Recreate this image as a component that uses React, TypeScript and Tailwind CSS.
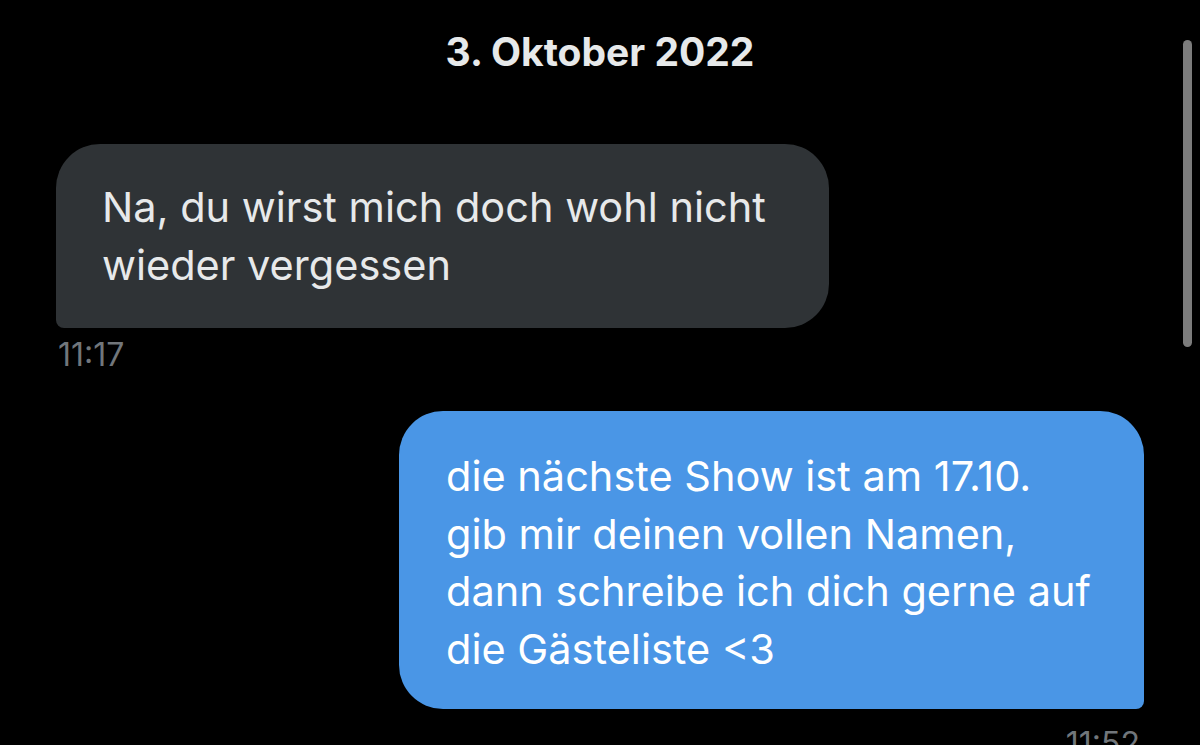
import React from "react";

const font = { fontFamily: "Inter, 'Noto Sans', sans-serif" };

const App = () => (
  <main
    className="relative w-[1200px] h-[745px] overflow-hidden bg-black text-[#e7e9ea]"
    style={font}
  >
    <div className="pt-[29px] text-center text-[39px] leading-[46px] font-bold text-[#e7e9ea]">
      3. Oktober 2022
    </div>

    <div className="mt-[69px] pl-[56px]">
      <div className="w-[773px] h-[184px] bg-[#2f3336] rounded-[44px] rounded-bl-[8px] px-[46px] py-[34px] text-[41.5px] leading-[58px] text-[#e7e9ea]">
        Na, du wirst mich doch wohl nicht
        <br />
        wieder vergessen
      </div>
      <div className="mt-[8px] pl-[2px] text-[32px] leading-[38px] text-[#71767b]">
        11:17
      </div>
    </div>

    <div className="mt-[37px] flex flex-col items-end pr-[56px]">
      <div className="w-[745px] h-[298px] bg-[#4a96e6] rounded-[44px] rounded-br-[8px] pl-[47px] pr-[40px] pt-[37px] pb-[31px] text-[41.5px] leading-[57.5px] text-white">
        die nächste Show ist am 17.10.
        <br />
        gib mir deinen vollen Namen,
        <br />
        dann schreibe ich dich gerne auf
        <br />
        die Gästeliste &lt;3
      </div>
      <div className="mt-[16px] pr-[4px] text-[32px] leading-[38px] text-[#71767b]">
        11:52
      </div>
    </div>

    <div className="absolute left-[1183px] top-[40px] w-[9px] h-[307px] rounded-full bg-[#7c7c7c]" />
  </main>
);

export default App;
